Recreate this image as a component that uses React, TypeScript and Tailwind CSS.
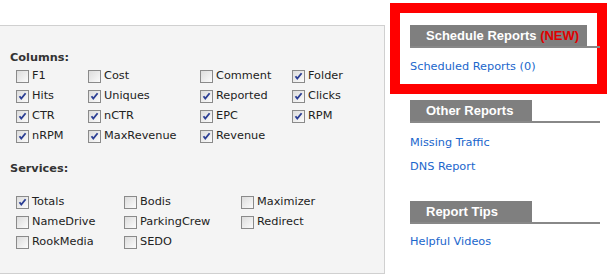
import React from 'react';

const columns: [string, boolean][] = [
  ['F1', false], ['Cost', false], ['Comment', false], ['Folder', true],
  ['Hits', true], ['Uniques', true], ['Reported', true], ['Clicks', true],
  ['CTR', true], ['nCTR', true], ['EPC', true], ['RPM', true],
  ['nRPM', true], ['MaxRevenue', true], ['Revenue', true],
];

const services: [string, boolean][] = [
  ['Totals', true], ['Bodis', false], ['Maximizer', false],
  ['NameDrive', false], ['ParkingCrew', false], ['Redirect', false],
  ['RookMedia', false], ['SEDO', false],
];

function Box({ checked }: { checked: boolean }) {
  return (
    <span className="relative inline-block w-[13px] h-[13px] shrink-0 border border-[#8a8a8a] bg-gradient-to-br from-[#dcdcdc] to-[#fbfbfb]">
      {checked && (
        <svg viewBox="0 0 11 11" className="absolute inset-0 w-[11px] h-[11px]">
          <path d="M2.5 5.2 L4.3 7.6 L8.6 2.2" fill="none" stroke="#2b3e94" strokeWidth="1.8" />
        </svg>
      )}
    </span>
  );
}

function Item({ label, checked }: { label: string; checked: boolean }) {
  return (
    <label className="flex items-center h-5 gap-[3px] text-[#222]">
      <Box checked={checked} />
      <span>{label}</span>
    </label>
  );
}

function SectionHead({ title, wide, extra }: { title: string; wide: string; extra?: string }) {
  return (
    <div className="flex items-end border-b-2 border-[#888] w-[190px]">
      <div
        className={`${wide} h-[21px] bg-[#7f7f7f] text-white font-bold text-[13px] pl-4 leading-[21px] whitespace-nowrap`}
        style={{ fontFamily: '"Liberation Sans", Arial, sans-serif' }}
      >
        {title}
        {extra && <span className="text-[#e00000]"> {extra}</span>}
      </div>
    </div>
  );
}

export default function App() {
  return (
    <div
      className="w-[607px] h-[279px] bg-white overflow-hidden flex text-[11.3px]"
      style={{ fontFamily: '"DejaVu Sans", Verdana, sans-serif' }}
    >
      {/* left options panel */}
      <div className="mt-[25px] w-[385px] h-[249px] shrink-0 bg-[#f4f4f4] border-t border-r border-b border-[#d0d0d0] pt-[24px]">
        <div className="pl-[10px] font-bold text-[#333] leading-4">Columns:</div>
        <div className="pl-4 grid grid-cols-[72px_112px_92px_auto]">
          {columns.map(([l, c]) => (
            <Item key={l} label={l} checked={c} />
          ))}
        </div>
        <div className="pl-[10px] mt-[15px] font-bold text-[#333] leading-4">Services:</div>
        <div className="pl-4 mt-[15px] grid grid-cols-[108px_117px_auto]">
          {services.map(([l, c]) => (
            <Item key={l} label={l} checked={c} />
          ))}
        </div>
      </div>

      {/* right sidebar */}
      <div className="ml-[5px] flex flex-col">
        <div className="mt-[3px] w-[217px] h-[91px] border-[10px] border-[#ff0000] pl-[10px] pt-[12px]">
          <SectionHead title="Schedule Reports" wide="w-[177px]" extra="(NEW)" />
          <a className="block mt-[11px] text-[#1a66cc]">Scheduled Reports (0)</a>
        </div>
        <div className="pl-[20px] pt-[6px]">
          <SectionHead title="Other Reports" wide="w-[122px]" />
          <a className="block mt-[12px] text-[#1a66cc] leading-4">Missing Traffic</a>
          <a className="block mt-[8px] text-[#1a66cc] leading-4">DNS Report</a>
          <div className="mt-[26px]">
            <SectionHead title="Report Tips" wide="w-[122px]" />
          </div>
          <a className="block mt-[10px] text-[#1a66cc] leading-4">Helpful Videos</a>
        </div>
      </div>
    </div>
  );
}
